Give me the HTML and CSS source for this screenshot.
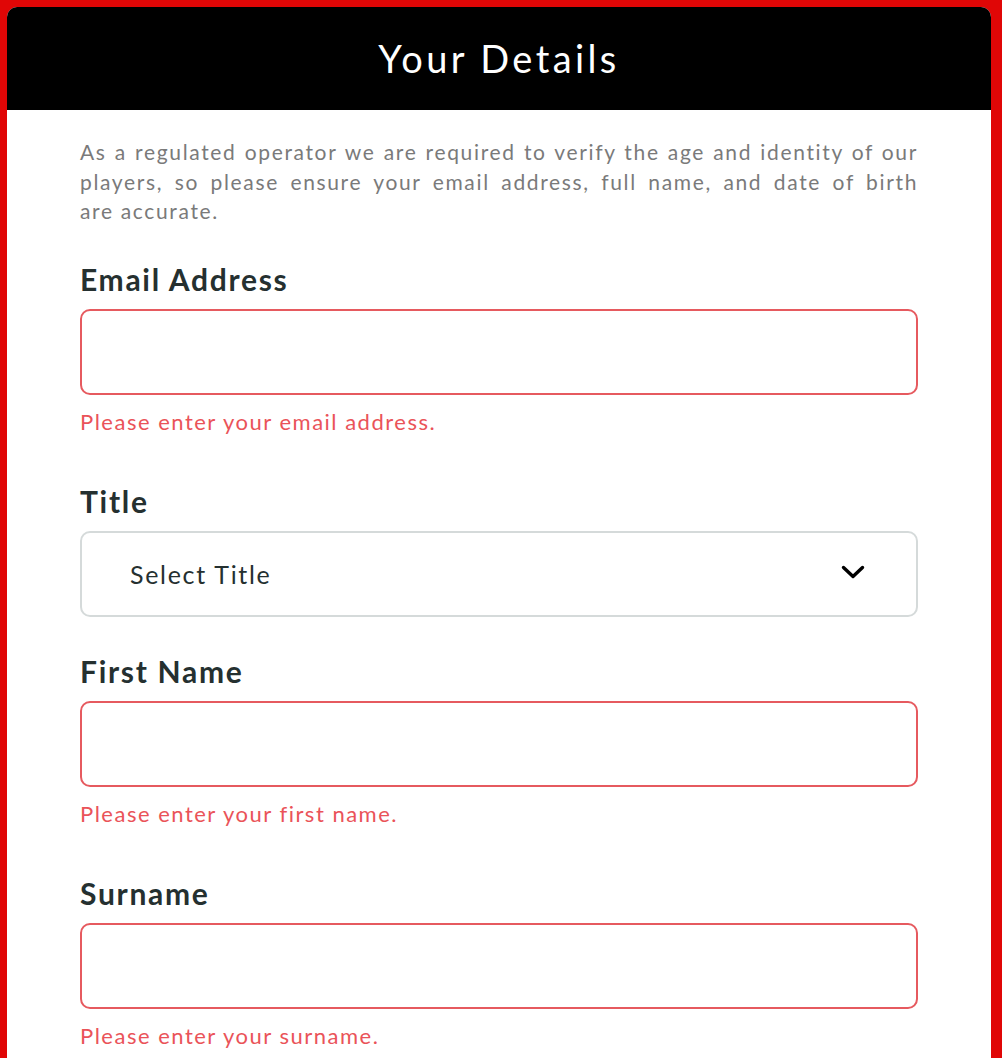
FILE: index.html
```html
<!DOCTYPE html>
<html lang="en">
<head>
<meta charset="utf-8">
<title>Your Details</title>
<link rel="stylesheet" href="styles.css">
</head>
<body>
<main class="page">
  <section class="card">
    <header class="card-head">
      <h1 class="card-title">Your Details</h1>
    </header>
    <div class="card-body">
      <p class="intro"><span class="intro-line">As a regulated operator we are required to verify the age and identity of our</span> <span class="intro-line">players, so please ensure your email address, full name, and date of birth</span> <span class="intro-line intro-last">are accurate.</span></p>

      <div class="field">
        <label class="field-label" for="email">Email Address</label>
        <input class="field-input is-invalid" id="email" type="email">
        <div class="field-error">Please enter your email address.</div>
      </div>

      <div class="field">
        <label class="field-label" for="title">Title</label>
        <div class="select">
          <span class="select-text">Select Title</span>
          <svg class="select-chevron" width="26" height="16" viewBox="0 0 26 16" aria-hidden="true">
            <path d="M3.5 3.5 L13 12.5 L22.5 3.5" fill="none" stroke="#000" stroke-width="3.4" stroke-linecap="round" stroke-linejoin="round"/>
          </svg>
        </div>
      </div>

      <div class="field">
        <label class="field-label" for="first">First Name</label>
        <input class="field-input is-invalid" id="first" type="text">
        <div class="field-error">Please enter your first name.</div>
      </div>

      <div class="field">
        <label class="field-label" for="surname">Surname</label>
        <input class="field-input is-invalid" id="surname" type="text">
        <div class="field-error">Please enter your surname.</div>
      </div>
    </div>
  </section>
</main>
</body>
</html>
```

FILE: styles.css
```css
html, body {
  margin: 0;
  padding: 0;
}
body {
  background: #e00606;
  font-family: Lato, "Open Sans", "Liberation Sans", sans-serif;
  height: 1058px;
  overflow: hidden;
}
.page {
  padding: 7px 11px 0 7px;
}
.card {
  background: #fff;
  border-radius: 10px 10px 0 0;
  overflow: hidden;
  min-height: 1100px;
}
.card-head {
  background: #000;
  height: 103px;
  display: flex;
  align-items: center;
  justify-content: center;
}
.card-title {
  margin: 0;
  color: #fff;
  font-size: 38px;
  font-weight: 400;
  letter-spacing: 3.4px;
  line-height: 1;
  padding-bottom: 2px;
}
.card-body {
  padding: 27px 73px 0 73px;
}
.intro {
  margin: 0 0 35px;
  color: #7a7a7a;
  font-size: 21px;
  line-height: 29.5px;
  letter-spacing: 1.65px;
}
.intro-line {
  display: block;
  text-align: justify;
  text-align-last: justify;
  white-space: nowrap;
}
.intro-line.intro-last {
  text-align: left;
  text-align-last: left;
}
.field {
  margin-bottom: 36px;
}
.field-label {
  display: block;
  color: #253030;
  font-size: 30px;
  font-weight: 700;
  line-height: 36px;
  letter-spacing: 1.7px;
  margin-bottom: 12px;
}
.field-input {
  display: block;
  box-sizing: border-box;
  width: 100%;
  height: 86px;
  border: 2px solid #d5dada;
  border-radius: 10px;
  background: #fff;
  font: inherit;
  padding: 0 20px;
  outline: none;
}
.field-input.is-invalid {
  border-color: #e65a5f;
}
.field-error {
  margin-top: 12px;
  padding-bottom: 10px;
  color: #ea5359;
  font-size: 22px;
  line-height: 30px;
  letter-spacing: 1.5px;
}
.select {
  box-sizing: border-box;
  height: 86px;
  border: 2px solid #d5dada;
  border-radius: 10px;
  display: flex;
  align-items: center;
  justify-content: space-between;
  padding: 0 50px 0 48px;
}
.select-text {
  color: #253030;
  font-size: 25px;
  letter-spacing: 1.7px;
}
.select-chevron {
  display: block;
  margin-top: -4px;
}
```
